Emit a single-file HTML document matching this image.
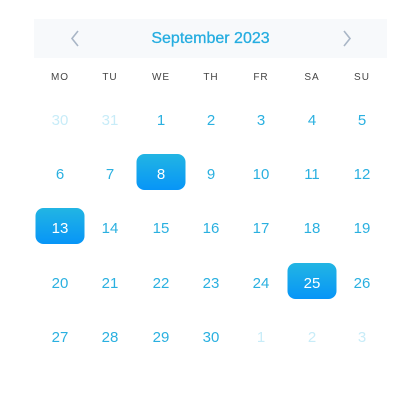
<!DOCTYPE html><html><head><style>
body{margin:0;width:420px;height:420px;background:#fff;font-family:"Liberation Sans",sans-serif;position:relative;overflow:hidden}
.hdr{position:absolute;left:34px;top:19px;width:353px;height:39px;background:#f7f9fb}
.t{position:absolute;left:0;right:0;top:11px;text-align:center;font-size:16px;color:#25ade0;font-weight:500;-webkit-text-stroke:0.3px #25ade0}
.c{position:absolute;width:50px;text-align:center;transform:translateX(-25px)}
.w{font-size:10px;color:#444;letter-spacing:1px;top:72px}
.d{font-size:15px;color:#2ab0e0;height:20px;line-height:20px}
.f{color:#c8ecf8}
.s{position:absolute;width:49px;height:36px;border-radius:8px;background:linear-gradient(#22b5e3,#0795f7);transform:translateX(-24.5px)}
</style></head><body>
<div class="hdr"><div class="t">September 2023</div>
<svg style="position:absolute;left:36px;top:11px" width="10" height="17"><path d="M8 1L2 8.5L8 16" stroke="#a9b6c6" stroke-width="1.6" fill="none"/></svg>
<svg style="position:absolute;left:308px;top:11px" width="10" height="17"><path d="M2 1L8 8.5L2 16" stroke="#a9b6c6" stroke-width="1.6" fill="none"/></svg>
</div>
<div class="s" style="left:161px;top:154px"></div>
<div class="s" style="left:60px;top:208px"></div>
<div class="s" style="left:312px;top:263px"></div>
<div id="g"></div>
<script>
var xs=[60,110,161,211,261,312,362],ys=[121,175,229,284,338],w=["MO","TU","WE","TH","FR","SA","SU"],h="";
w.forEach((t,i)=>h+=`<div class="c w" style="left:${xs[i]}px">${t}</div>`);
var days=[30,31];for(var i=1;i<=30;i++)days.push(i);days.push(1,2,3);
days.forEach((d,k)=>{var r=Math.floor(k/7),c=k%7;var f=(r==0&&d>20)||(r==4&&d<10);var sel=(d==8&&r==1)||(d==13)||(d==25);
h+=`<div class="c d${f?' f':''}" style="left:${xs[c]}px;top:${ys[r]-10}px;${sel?'color:#fff':''}">${d}</div>`});
document.getElementById('g').innerHTML=h;
</script>
</body></html>
